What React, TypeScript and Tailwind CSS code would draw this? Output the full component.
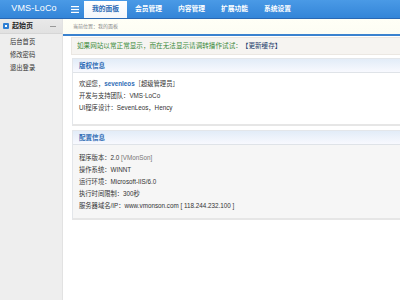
const font = { fontFamily: '"Liberation Sans", "Noto Sans CJK SC", sans-serif' };

const tabs = ['我的面板', '会员管理', '内容管理', '扩展功能', '系统设置'];
const menu = ['后台首页', '修改密码', '退出登录'];

function Panel({ title, gray, children }: { title: string; gray?: boolean; children: React.ReactNode }) {
  return (
    <div className="border border-[#e3e6ea] border-r-0 border-b-2 border-b-[#e6e6e6]">
      <div className="h-[14px] flex items-center pl-[6px] bg-gradient-to-b from-[#e2ecf8] to-[#f8f9fe] border-b border-[#dfe3e8]">
        <span className="text-[6.5px] font-bold text-[#2d6bb5]">{title}</span>
      </div>
      <div className={`pl-[6px] pt-[5px] pb-[6px] text-[6.3px] leading-[12px] text-[#333] ${gray ? 'bg-[#f6f6f6]' : 'bg-white'}`}>
        {children}
      </div>
    </div>
  );
}

export default function App() {
  return (
    <div className="w-[400px] h-[300px] overflow-hidden bg-white flex flex-col" style={font}>
      <div className="h-[19px] shrink-0 flex items-end bg-gradient-to-b from-[#4a9ae6] to-[#3385d8] border-b border-[#2968b4]">
        <div className="w-[68px] h-full flex items-center justify-center text-white text-[9px] tracking-[0.2px]">VMS-LoCo</div>
        <div className="h-full flex items-center ml-[3px] mr-[5px]">
          <svg width="8" height="7" viewBox="0 0 8 7">
            <rect y="0" width="8" height="1.2" fill="#fff" />
            <rect y="2.9" width="8" height="1.2" fill="#fff" />
            <rect y="5.8" width="8" height="1.2" fill="#fff" />
          </svg>
        </div>
        {tabs.map((t, i) => (
          <div
            key={t}
            className={`w-[43px] flex items-center justify-center text-[6.8px] font-bold ${
              i === 0 ? 'h-[17px] bg-gradient-to-b from-white to-[#f2f6fb] text-[#2d6bb5]' : 'h-full text-white'
            }`}
          >
            {t}
          </div>
        ))}
      </div>

      <div className="flex flex-1">
        <div className="w-[63px] shrink-0 bg-[#eeeeee] border-r border-[#e2e2e2]">
          <div className="h-[15px] flex items-center px-[3px] bg-gradient-to-b from-[#e9e9e9] to-[#e1e1e1] border-b border-[#d6d6d6]">
            <span className="w-[6px] h-[6px] rounded-[1px] bg-[#2f7fd4] flex items-center justify-center">
              <span className="w-[2px] h-[2px] bg-white" />
            </span>
            <span className="ml-[3px] text-[7px] font-bold text-[#222]">起始页</span>
            <span className="ml-auto mr-[3px] w-[6px] h-px bg-[#999]" />
          </div>
          <div className="pt-[1px]">
            {menu.map((m) => (
              <div key={m} className="h-[13px] flex items-center pl-[10px] text-[6.3px] text-[#333]">
                {m}
              </div>
            ))}
          </div>
        </div>

        <div className="flex-1 min-w-0">
          <div className="h-[17px] flex items-center pl-[10px] bg-gradient-to-b from-[#fffff6] to-[#fdfdf4] border-b-2 border-[#3a82cf]">
            <span className="text-[5px] text-[#888]">当前位置：我的面板</span>
          </div>
          <div className="pl-[8px]">
            <div className="mt-[1px] h-[18px] flex items-center pl-[5px] bg-[#f6f4f1] border border-r-0 border-[#ebe7e2] text-[6.6px] whitespace-nowrap">
              <span className="text-[#3a8a3a]">如果网站以常正常显示，而在无法显示请调转播作试试：</span>
              <span className="text-[#1f3f6e]">【更新缓存】</span>
            </div>
            <div className="mt-[3px] ml-[1px]">
              <Panel title="版权信息">
                <div>
                  欢迎您，<span className="text-[#2d6bb5] font-bold">sevenleos</span>［超级管理员］
                </div>
                <div>开发与支持团队：VMS·LoCo</div>
                <div>UI程序设计：SevenLeos，Hency</div>
                <div className="h-[4px]" />
              </Panel>
            </div>
            <div className="mt-[4px] ml-[1px]">
              <Panel title="配置信息" gray>
                <div className="h-[2px]" />
                <div>
                  程序版本：2.0 <span className="text-[#777]">[VMonSon]</span>
                </div>
                <div>操作系统：WINNT</div>
                <div>运行环境：Microsoft-IIS/6.0</div>
                <div>执行时间限制：300秒</div>
                <div>服务器域名/IP：www.vmonson.com [ 118.244.232.100 ]</div>
              </Panel>
            </div>
          </div>
        </div>
      </div>
    </div>
  );
}
